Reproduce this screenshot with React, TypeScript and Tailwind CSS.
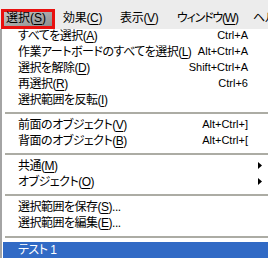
import React from 'react';

type Row =
  | { kind: 'item'; label: string; key: string; tail?: string; shortcut?: string; sub?: boolean; active?: boolean }
  | { kind: 'sep'; h: string };

const rows: Row[] = [
  { kind: 'item', label: 'すべてを選択(', key: 'A', tail: ')', shortcut: 'Ctrl+A' },
  { kind: 'item', label: '作業アートボードのすべてを選択(', key: 'L', tail: ')', shortcut: 'Alt+Ctrl+A' },
  { kind: 'item', label: '選択を解除(', key: 'D', tail: ')', shortcut: 'Shift+Ctrl+A' },
  { kind: 'item', label: '再選択(', key: 'R', tail: ')', shortcut: 'Ctrl+6' },
  { kind: 'item', label: '選択範囲を反転(', key: 'I', tail: ')' },
  { kind: 'sep', h: 'h-[9px]' },
  { kind: 'item', label: '前面のオブジェクト(', key: 'V', tail: ')', shortcut: 'Alt+Ctrl+]' },
  { kind: 'item', label: '背面のオブジェクト(', key: 'B', tail: ')', shortcut: 'Alt+Ctrl+[' },
  { kind: 'sep', h: 'h-[9px]' },
  { kind: 'item', label: '共通(', key: 'M', tail: ')', sub: true },
  { kind: 'item', label: 'オブジェクト(', key: 'O', tail: ')', sub: true },
  { kind: 'sep', h: 'h-[9px]' },
  { kind: 'item', label: '選択範囲を保存(', key: 'S', tail: ')...' },
  { kind: 'item', label: '選択範囲を編集(', key: 'E', tail: ')...' },
  { kind: 'sep', h: 'h-[11px]' },
  { kind: 'item', label: 'テスト 1', key: '', active: true },
];

function Mnemonic({ label, k, tail, className = '' }: { label: string; k: string; tail?: string; className?: string }) {
  return (
    <span className={`whitespace-nowrap ${className}`}>
      {label}
      {k && <span className="underline underline-offset-2">{k}</span>}
      {tail}
    </span>
  );
}

export default function App() {
  return (
    <div className="w-[268px] h-[259px] overflow-hidden bg-white text-[12px] leading-none text-black [font-family:'Liberation_Sans','Noto_Sans_CJK_JP',sans-serif] [font-feature-settings:'palt']">
      {/* Menu bar */}
      <div className="flex h-[29px] items-end overflow-hidden whitespace-nowrap bg-[#ececec]">
        <div className="ml-[1px] flex h-[20px] w-[54px] shrink-0 items-center border-[3px] border-[#e8110f] bg-gradient-to-br from-[#c4c4c4] to-[#8e8e8e] pl-[2px] pb-[2px]">
          <Mnemonic label="選択(" k="S" tail=")" />
        </div>
        <div className="ml-[8px] flex h-[20px] w-[57px] shrink-0 items-center pb-[2px]">
          <Mnemonic label="効果(" k="C" tail=")" className="tracking-[-0.3px]" />
        </div>
        <div className="flex h-[20px] w-[57px] shrink-0 items-center pb-[2px]">
          <Mnemonic label="表示(" k="V" tail=")" className="tracking-[-0.3px]" />
        </div>
        <div className="flex h-[20px] w-[76px] shrink-0 items-center pb-[2px]">
          <Mnemonic label="ウィンドウ(" k="W" tail=")" className="tracking-[-1.2px]" />
        </div>
        <div className="flex h-[20px] shrink-0 items-center pb-[2px]">ヘルプ</div>
      </div>

      {/* Dropdown */}
      <div className="flex flex-col border-l-2 border-[#a4a4a4] pl-px">
        {rows.map((r, i) =>
          r.kind === 'sep' ? (
            <div key={i} className={`flex items-center ${r.h} pl-[2px]`}>
              <div className="h-[2px] w-full bg-[#acaca4]" />
            </div>
          ) : (
            <div
              key={i}
              className={`flex h-[16px] items-center whitespace-nowrap pb-[1px] pl-[15px] pr-[20px] ${i === 0 ? '-mt-[1px]' : ''} ${r.active ? 'bg-[#316ac5] text-white' : ''}`}
            >
              <Mnemonic label={r.label} k={r.key} tail={r.tail} className="tracking-[-0.5px]" />
              <span className="ml-auto text-[11px]">{r.shortcut}</span>
              {r.sub && (
                <svg width="4" height="7" viewBox="0 0 4 7" className="-mr-[14px]">
                  <path d="M0 0 L4 3.5 L0 7 Z" fill="#000" />
                </svg>
              )}
            </div>
          )
        )}
      </div>
    </div>
  );
}
